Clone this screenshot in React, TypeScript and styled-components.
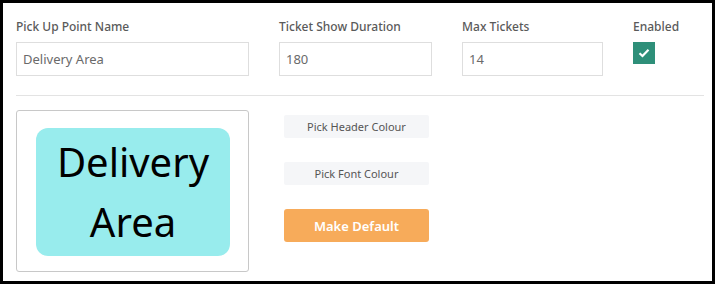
import React from "react";
import styled, { createGlobalStyle } from "styled-components";

const Global = createGlobalStyle`
  html, body { margin: 0; padding: 0; background: #fff; }
  body { font-family: "Noto Sans", "Open Sans", sans-serif; }
  * { box-sizing: border-box; }
`;

const Frame = styled.div`
  width: 715px;
  height: 284px;
  border: 3px solid #000;
  padding: 14px 8px 0 13px;
`;

const FieldRow = styled.div`
  display: grid;
  grid-template-columns: 233px 153px 141px auto;
  column-gap: 30px;
  padding-bottom: 19px;
  border-bottom: 1px solid #e3e3e3;
`;

const Field = styled.div`
  display: flex;
  flex-direction: column;
  gap: 6px;
`;

const Label = styled.label`
  font-size: 12px;
  font-weight: 500;
  color: #5a5a5a;
  line-height: 19px;
  height: 19px;
`;

const Input = styled.input`
  width: 100%;
  height: 34px;
  border: 1px solid #dedede;
  border-radius: 0;
  padding: 0 6px;
  font-family: inherit;
  font-size: 13px;
  color: #6a6a6a;
  outline: none;
`;

const Check = styled.div`
  width: 22px;
  height: 22px;
  background: #2e8f79;
  display: flex;
  align-items: center;
  justify-content: center;
`;

const Bottom = styled.div`
  display: grid;
  grid-template-columns: 233px auto;
  column-gap: 35px;
  margin-top: 14px;
`;

const Preview = styled.div`
  height: 162px;
  border: 1px solid #c8c8c8;
  border-radius: 3px;
  padding: 17px 18px 15px 19px;
`;

const Ticket = styled.div<{ $bg: string; $fg: string }>`
  height: 100%;
  background: ${(p) => p.$bg};
  color: ${(p) => p.$fg};
  border-radius: 12px;
  display: flex;
  align-items: center;
  justify-content: center;
  text-align: center;
  font-size: 40px;
  line-height: 60px;
  font-weight: 400;
`;

const Buttons = styled.div`
  display: flex;
  flex-direction: column;
  width: 145px;
  padding-top: 5px;
`;

const PickButton = styled.button`
  height: 23px;
  border: none;
  border-radius: 2px;
  background: #f5f6f8;
  color: #555;
  font-family: inherit;
  font-size: 11px;
  margin-bottom: 24px;
  padding: 0;
`;

const DefaultButton = styled.button`
  height: 33px;
  border: none;
  border-radius: 3px;
  background: #f7ab5a;
  color: #fff;
  font-family: inherit;
  font-size: 13px;
  font-weight: 600;
  padding: 0;
`;

export default function App() {
  return (
    <>
      <Global />
      <Frame>
        <FieldRow>
          <Field>
            <Label>Pick Up Point Name</Label>
            <Input defaultValue="Delivery Area" />
          </Field>
          <Field>
            <Label>Ticket Show Duration</Label>
            <Input defaultValue="180" />
          </Field>
          <Field>
            <Label>Max Tickets</Label>
            <Input defaultValue="14" />
          </Field>
          <Field>
            <Label>Enabled</Label>
            <Check>
              <svg width="12" height="10" viewBox="0 0 12 10">
                <path d="M1.5 5.2 L4.5 8 L10.5 1.8" fill="none" stroke="#fff" strokeWidth="2.2" />
              </svg>
            </Check>
          </Field>
        </FieldRow>
        <Bottom>
          <Preview>
            <Ticket $bg="#98eced" $fg="#000">Delivery Area</Ticket>
          </Preview>
          <Buttons>
            <PickButton>Pick Header Colour</PickButton>
            <PickButton>Pick Font Colour</PickButton>
            <DefaultButton>Make Default</DefaultButton>
          </Buttons>
        </Bottom>
      </Frame>
    </>
  );
}
